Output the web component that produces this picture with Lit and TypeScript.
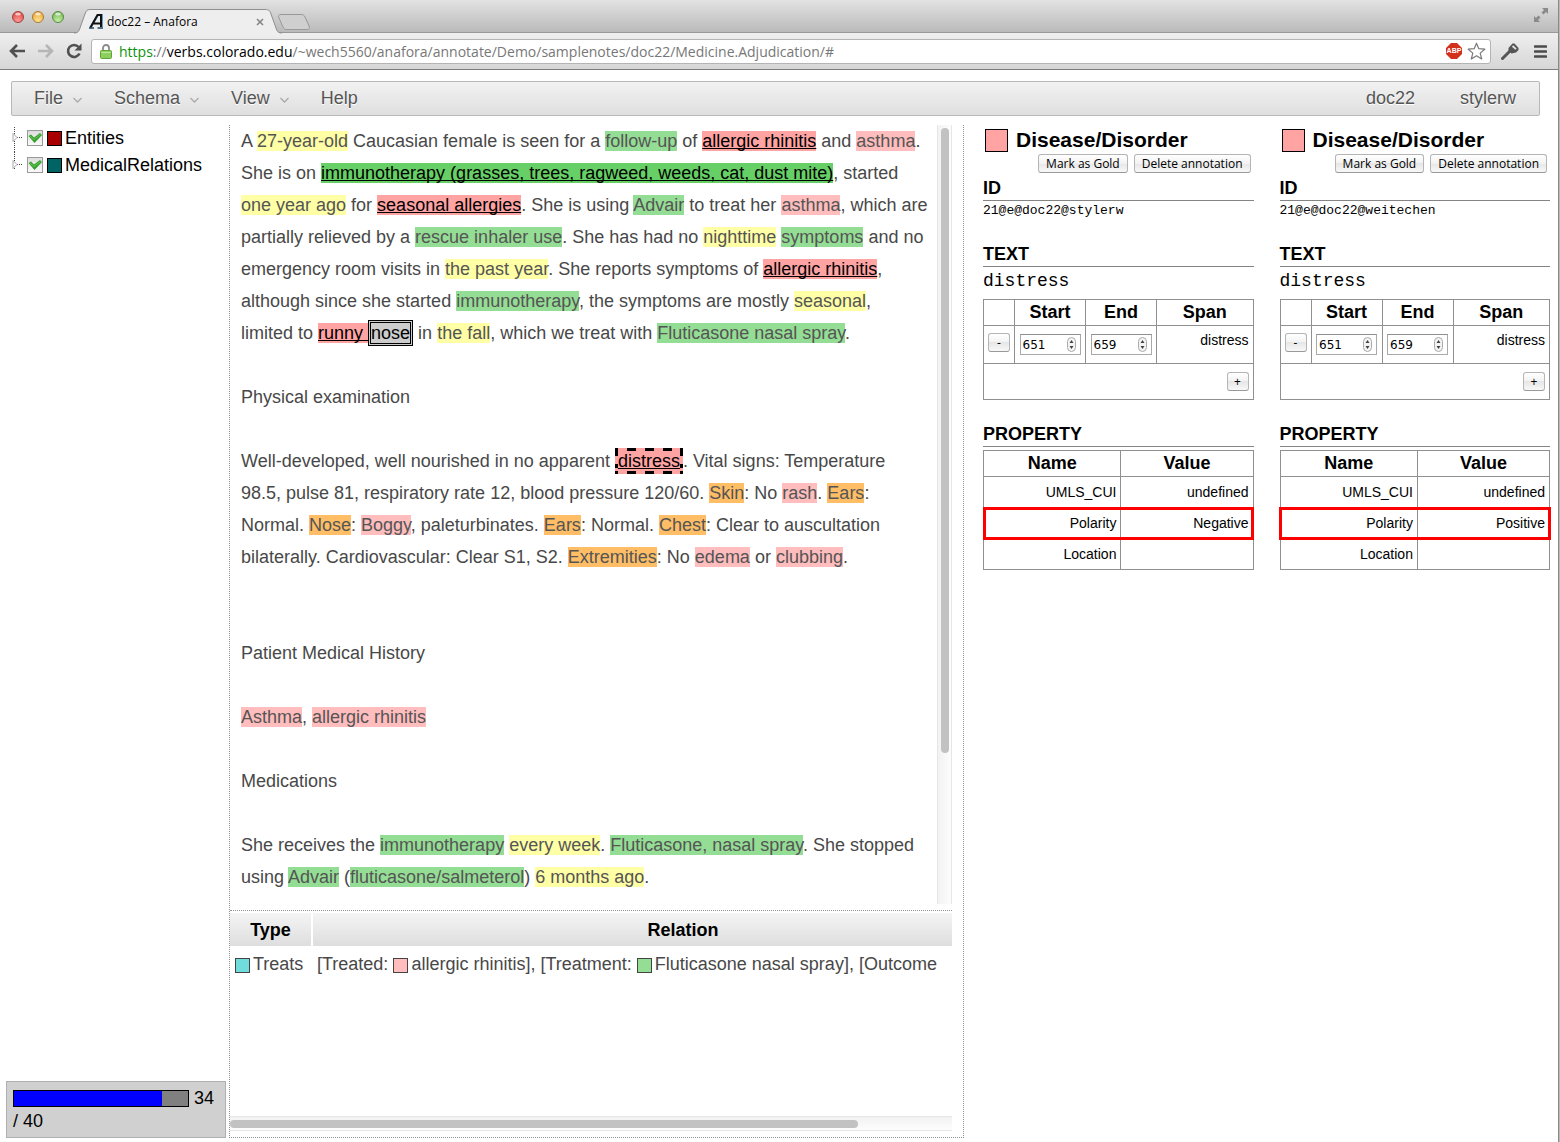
import { LitElement, html, css, svg } from "lit";
import { customElement, property } from "lit/decorators.js";

const mark = (kind: string, text: string) => html`<mark class=${kind}>${text}</mark>`;
const time = (t: string) => mark("time", t);
const med = (t: string) => mark("med", t);
const dis = (t: string) => mark("dis", t);
const body = (t: string) => mark("body", t);
const disLink = (t: string) => mark("dis linked", t);
const medLink = (t: string) => mark("med linked", t);

const NOTE = [
  html`A ${time("27-year-old")} Caucasian female is seen for a ${med("follow-up")} of ${disLink("allergic rhinitis")} and ${dis("asthma")}.`,
  html`She is on ${medLink("immunotherapy (grasses, trees, ragweed, weeds, cat, dust mite)")}, started`,
  html`${time("one year ago")} for ${disLink("seasonal allergies")}. She is using ${med("Advair")} to treat her ${dis("asthma")}, which are`,
  html`partially relieved by a ${med("rescue inhaler use")}. She has had no ${time("nighttime")} ${med("symptoms")} and no`,
  html`emergency room visits in ${time("the past year")}. She reports symptoms of ${disLink("allergic rhinitis")},`,
  html`although since she started ${med("immunotherapy")}, the symptoms are mostly ${time("seasonal")},`,
  html`limited to ${disLink("runny ")}${mark("overlap", "nose")} in ${time("the fall")}, which we treat with ${med("Fluticasone nasal spray")}.`,
  html``,
  html`Physical examination`,
  html``,
  html`Well-developed, well nourished in no apparent ${mark("dis linked current", "distress")}. Vital signs: Temperature`,
  html`98.5, pulse 81, respiratory rate 12, blood pressure 120/60. ${body("Skin")}: No ${dis("rash")}. ${body("Ears")}:`,
  html`Normal. ${body("Nose")}: ${dis("Boggy")}, paleturbinates. ${body("Ears")}: Normal. ${body("Chest")}: Clear to auscultation`,
  html`bilaterally. Cardiovascular: Clear S1, S2. ${body("Extremities")}: No ${dis("edema")} or ${dis("clubbing")}.`,
  html``,
  html``,
  html`Patient Medical History`,
  html``,
  html`${dis("Asthma")}, ${dis("allergic rhinitis")}`,
  html``,
  html`Medications`,
  html``,
  html`She receives the ${med("immunotherapy")} ${time("every week")}. ${med("Fluticasone, nasal spray")}. She stopped`,
  html`using ${med("Advair")} (${med("fluticasone/salmeterol")}) ${time("6 months ago")}.`,
];

@customElement("browser-bar")
export class BrowserBar extends LitElement {
  static styles = css`
    :host { display: block; font-family: "Open Sans", "Noto Sans", sans-serif; color: #000; }
    .strip {
      display: flex; height: 33px; box-sizing: border-box; padding: 0 12px;
      background: linear-gradient(#e2e2e2, #bababa); border-bottom: 1px solid #999;
    }
    .lights { display: flex; gap: 8px; padding-top: 11px; }
    .lights svg { display: block; }
    .tab { position: relative; display: flex; align-items: center; width: 216px; height: 25px; margin: 9px 0 0 10px; }
    .shape { position: absolute; left: 0; top: 0; }
    .favicon { position: relative; margin-left: 15px; }
    .name { position: relative; flex: 1; margin-left: 3px; font-size: 12px; line-height: 24px; }
    .close { position: relative; border: 0; padding: 0; margin-right: 26px; background: none; height: 8px; display: flex; }
    .newtab { margin: 14px auto 0 -13px; border: 0; padding: 0; background: none; height: 17px; display: flex; }
    .full { border: 0; padding: 0; margin-top: 8px; background: none; height: 14px; display: flex; }
    .tools {
      display: flex; align-items: center; height: 37px; box-sizing: border-box; padding: 0 13px 0 9px;
      background: linear-gradient(#efefef, #d6d6d6); border-bottom: 1px solid #7c7c7c;
    }
    .tools button { border: 0; padding: 0; background: none; display: flex; margin-right: 12px; }
    .tools .reload { margin-right: 9px; }
    .address {
      display: flex; align-items: center; flex: 1; min-width: 0; height: 23px; padding: 0 4px 0 8px; margin-right: 10px;
      background: #fff; border: 1px solid #b4b4b4; border-radius: 3px; overflow: hidden;
    }
    .url { flex: 1; margin-left: 7px; font-size: 14px; line-height: 23px; white-space: nowrap; color: #777; outline: none; }
    .scheme { color: #0a930a; }
    .domain { color: #000; }
    .address svg { flex: none; }
    .star { margin-left: 5px; }
    .tools .wrench { margin-right: 15px; }
    .tools .menu { margin-right: 0; }
    .abp { font: bold 7px "Liberation Sans", sans-serif; fill: #fff; }
  `;

  private light(id: string, edge: string, top: string, low: string) {
    return html`<svg width="12" height="12" viewBox="0 0 12 12">
      <defs><radialGradient id=${id} cx=".5" cy=".85" r=".8"><stop offset="0" stop-color=${low}></stop><stop offset="1" stop-color=${top}></stop></radialGradient></defs>
      <circle cx="6" cy="6" r="5.5" fill="url(#${id})" stroke=${edge}></circle>
      <ellipse cx="6" cy="3" rx="2.8" ry="1.6" fill="#fff" opacity=".65"></ellipse></svg>`;
  }

  render() {
    return html`
      <div class="strip">
        <div class="lights">
          ${this.light("r", "#a4403c", "#dd4a46", "#ff9b96")}
          ${this.light("y", "#a87b35", "#eda73c", "#ffe48f")}
          ${this.light("g", "#5a8a45", "#79b95a", "#c6f0a4")}
        </div>
        <div class="tab">
          <svg class="shape" width="216" height="25" viewBox="0 0 216 25">
            <path d="M-3 25V24.5H0C4 24.500 5 22 6 19L11 5C12 2 13 .5 16 .5H191C195 .5 196 2 197 5L202 19C203 22 204 24.500 208 24.500H216V25Z" fill="#eeeeee"></path>
            <path d="M0 24C4 24 5 22 6 19L11 5C12 2 13 .5 16 .5H191C195 .5 196 2 197 5L202 19C203 22 204 24 208 24" fill="none" stroke="#8f8f8f"></path>
          </svg>
          <svg class="favicon" width="15" height="15" viewBox="0 0 15 15">
            <path d="M1 14 9 1h4v12" fill="none" stroke="#5b9fd0" stroke-width="2"></path>
            <path d="M1.500 13.500 8.500 1h3.500V13M4.500 9.500H12" fill="none" stroke="#111" stroke-width="2"></path>
            <path d="M0 14h5M8.500 14H14" stroke="#27455c" stroke-width="1.500"></path>
          </svg>
          <span class="name">doc22 – Anafora</span>
          <button class="close" aria-label="Close tab"><svg width="8" height="8"><path d="M1 1l6 6M7 1l-6 6" stroke="#858585" stroke-width="1.600"></path></svg></button>
        </div>
        <button class="newtab" aria-label="New tab"><svg width="34" height="17"><path d="M4 .5H24C26 .5 27 1 28 3L32 12C33 14 32.500 15.500 30 15.500H10C8 15.500 7 15 6 13L2 4C1 2 1.500 .5 4 .5Z" fill="#cfcfcf" stroke="#999"></path></svg></button>
        <button class="full" aria-label="Full screen"><svg width="14" height="14" viewBox="0 0 14 14"><path d="M14 0V6L12 4 9.500 6.500 7.500 4.500 10 2 8 0ZM0 14V8L2 10 4.500 7.500 6.500 9.500 4 12 6 14Z" fill="#8a8a8a"></path></svg></button>
      </div>
      <div class="tools">
        <button aria-label="Back"><svg width="17" height="14"><path d="M8 1 2 7l6 6M2 7h14" fill="none" stroke="#505050" stroke-width="2.600"></path></svg></button>
        <button aria-label="Forward"><svg width="16" height="14"><path d="M8 1l6 6-6 6M14 7H0" fill="none" stroke="#b5b5b5" stroke-width="2.600"></path></svg></button>
        <button class="reload" aria-label="Reload"><svg width="16" height="16"><path d="M12.600 4A6 6 0 1 0 13.500 10.500" fill="none" stroke="#505050" stroke-width="2.600"></path><path d="M15.500 .5V7.500H8.500Z" fill="#505050"></path></svg></button>
        <div class="address">
          <svg width="12" height="15"><path d="M3 7V4a3 3 0 0 1 6 0v3" fill="none" stroke="#8b8b8b" stroke-width="1.800"></path><rect x=".5" y="6.500" width="11" height="8" rx="1" fill="#8ccf5e" stroke="#5fa435"></rect><path d="M1.500 8.500h9" stroke="#bfe8a0"></path></svg>
          <span class="url" role="textbox" aria-label="Address"><span class="scheme">https</span>://<span class="domain">verbs.colorado.edu</span>/~wech5560/anafora/annotate/Demo/samplenotes/doc22/Medicine.Adjudication/#</span>
          <svg width="16" height="16"><path d="M5 0h6l5 5v6l-5 5H5l-5-5V5Z" fill="#d3301c"></path><text class="abp" x="8" y="10" text-anchor="middle">ABP</text></svg>
          <svg class="star" width="19" height="18" viewBox="0 0 19 18"><path d="M9.500 1.200 11.800 6.700 17.800 7.200 13.200 11.100 14.700 17 9.500 13.800 4.300 17 5.800 11.100 1.200 7.200 7.200 6.700Z" fill="#fff" stroke="#7a7a7a" stroke-width="1.200" stroke-linejoin="round"></path></svg>
        </div>
        <button class="wrench" aria-label="Extension"><svg width="18" height="17" viewBox="0 0 18 17"><path d="M1.500 15.500 9 8" stroke="#555" stroke-width="3" stroke-linecap="round"></path><path d="M7.500 5 11.500 .5 13.500 .5 17.500 5V7L15 9.500 10.500 10.500 7.500 8Z" fill="#555"></path><path d="M11.500 3 15 6.200" stroke="#e2e2e2" stroke-width="1.800"></path></svg></button>
        <button class="menu" aria-label="Menu"><svg width="13" height="13"><path d="M1 1.500h11M1 6.500h11M1 11.500h11" stroke="#4c4c4c" stroke-width="2.600" stroke-linecap="round"></path></svg></button>
      </div>`;
  }
}

@customElement("annotation-panel")
export class AnnotationPanel extends LitElement {
  @property() owner = "";
  @property() polarity = "";

  static styles = css`
    :host { display: block; min-width: 0; padding-top: 3px; color: #000; }
    .title { display: flex; align-items: center; gap: 8px; height: 24px; margin: 0; padding-left: 2px; font-size: 21px; font-weight: bold; }
    .swatch { width: 21px; height: 21px; background: #ffa3a3; border: 1px solid #000; }
    .actions { display: flex; justify-content: flex-end; gap: 6px; padding: 2px 3px 0 0; }
    button {
      font: 12px "Open Sans", "Noto Sans", sans-serif; color: #000; height: 19px; padding: 0 7px; line-height: 17px;
      border: 1px solid #b5b5b5; border-bottom-color: #999; border-radius: 3px; background: linear-gradient(#fff, #f2f2f2 50%, #e6e6e6 50%, #f8f8f8);
    }
    h3 { margin: 0; font-size: 18px; line-height: 23px; border-bottom: 1px solid #848484; }
    .first { margin-top: 4px; }
    .next { margin-top: 22px; }
    .last { margin-top: 23px; }
    .id { font: 13px/20px "Liberation Mono", monospace; }
    .text { font: 18px/28px "Liberation Mono", monospace; }
    table { width: 100%; table-layout: fixed; border-collapse: collapse; margin-top: 4px; }
    th, td { border: 1px solid #909090; box-sizing: border-box; }
    th { font-size: 18px; line-height: 25px; padding: 0; }
    td { font-size: 14px; text-align: right; padding: 0 4px; }
    .c0 { width: 31px; }
    .c1 { width: 71px; }
    .name { width: 51%; }
    .spans td { height: 38px; }
    .spans .top { vertical-align: top; line-height: 28px; }
    .spans .fit { text-align: center; padding: 0; }
    .spans .adder { height: 36px; }
    .small { width: 22px; padding: 0; }
    .fit .small { margin-bottom: 4px; }
    .adder .small { display: block; margin-left: auto; }
    .field { display: flex; align-items: center; box-sizing: border-box; width: 61px; height: 21px; margin: 0 auto; padding-right: 4px; border: 1px solid #a9a9a9; border-top-color: #8f8f8f; }
    input { flex: 1; min-width: 0; border: 0; padding: 0 0 0 2px; font: 12px "DejaVu Sans", sans-serif; color: #000; background: none; appearance: textfield; outline: none; }
    input::-webkit-inner-spin-button { display: none; }
    .props { margin-top: 3px; }
    .props td { height: 31px; }
    .props .conflict { outline: 3px solid #f00; outline-offset: -2px; }
  `;

  private field(label: string, value: number) {
    return html`<span class="field"><input type="number" aria-label=${label} .value=${String(value)} />
      <svg width="9" height="15" viewBox="0 0 9 15"><rect x=".5" y=".5" width="8" height="14" rx="4" fill="#f4f4f4" stroke="#aaa"></rect><path d="M2.500 6h4L4.500 3ZM2.500 9h4L4.500 12Z" fill="#444"></path></svg></span>`;
  }

  render() {
    return html`
      <h2 class="title"><span class="swatch"></span>Disease/Disorder</h2>
      <div class="actions"><button>Mark as Gold</button><button>Delete annotation</button></div>
      <h3 class="first">ID</h3>
      <div class="id">21@e@doc22@${this.owner}</div>
      <h3 class="next">TEXT</h3>
      <div class="text">distress</div>
      <table class="spans">
        <tr><th class="c0"></th><th class="c1">Start</th><th class="c1">End</th><th>Span</th></tr>
        <tr>
          <td class="fit"><button class="small" aria-label="Remove span">-</button></td>
          <td class="fit">${this.field("Start", 651)}</td>
          <td class="fit">${this.field("End", 659)}</td>
          <td class="top">distress</td>
        </tr>
        <tr><td class="adder" colspan="4"><button class="small" aria-label="Add span">+</button></td></tr>
      </table>
      <h3 class="last">PROPERTY</h3>
      <table class="props">
        <tr><th class="name">Name</th><th>Value</th></tr>
        <tr><td>UMLS_CUI</td><td>undefined</td></tr>
        <tr class="conflict"><td>Polarity</td><td>${this.polarity}</td></tr>
        <tr><td>Location</td><td></td></tr>
      </table>`;
  }
}

@customElement("app-root")
export class AppRoot extends LitElement {
  static styles = css`
    :host { display: flex; flex-direction: column; position: relative; min-height: 100vh; background: #fff; font: 18px "Liberation Sans", Arial, sans-serif; color: #484848; }
    .edge { position: absolute; right: 0; top: 0; bottom: 0; width: 2px; box-sizing: border-box; border-left: 1px solid #8a8a8a; background: #b9b9b9; }
    .menubar {
      display: flex; align-items: center; height: 33px; margin: 11px 20px 9px 11px; padding: 0 23px 0 22px;
      border: 1px solid #b8b8b8; border-radius: 2px; background: linear-gradient(#f2f2f2, #dfdfdf);
    }
    .menubar button { display: flex; align-items: center; gap: 10px; border: 0; padding: 0; margin-right: 32px; background: none; font: inherit; color: #555; text-shadow: 0 1px 0 #fff; }
    .menubar svg { margin-top: 3px; }
    .menubar .user { margin: 0 0 0 45px; }
    .menubar .push { margin-left: auto; }
    .columns { flex: 1; display: grid; grid-template-columns: 229px minmax(0, 1fr) 596px; }
    .side { display: flex; flex-direction: column; justify-content: space-between; padding: 0 3px 4px 6px; color: #000; }
    .tree { list-style: none; margin: 0; padding: 0 0 0 6px; }
    .tree li { display: flex; align-items: center; height: 27px; }
    .tree label { display: flex; align-items: center; line-height: 20px; padding-bottom: 2px; }
    .twig { flex: none; }
    .check { display: grid; margin: 0 4px; }
    .check input, .check svg { grid-area: 1 / 1; margin: 0; }
    .check input { appearance: none; width: 16px; height: 16px; border: 1px solid #9a9a9a; background: linear-gradient(#ddd, #fafafa); }
    .check svg { pointer-events: none; }
    .box { display: inline-block; box-sizing: border-box; width: 15px; height: 15px; border: 1px solid #000; }
    .tree .box { margin: 2px 3px 0 0; }
    .entities { background: #a80000; }
    .relations { background: #006464; }
    .progress { border: 1px solid #b0b0b0; background: #d0d0d0; padding: 5px 5px 4px 6px; line-height: 23px; }
    progress { appearance: none; box-sizing: border-box; width: 176px; height: 17px; border: 1px solid #000; vertical-align: -3px; }
    progress::-webkit-progress-bar { background: #808080; }
    progress::-webkit-progress-value { background: #00f; }
    .center { display: flex; flex-direction: column; border: 1px dotted #909090; border-top: 0; margin-bottom: 4px; padding-right: 11px; }
    .note { display: flex; }
    .lines { flex: 1; min-width: 0; overflow: hidden; padding: 0 0 11px 11px; }
    .line { height: 32px; line-height: 32px; white-space: pre; }
    mark { color: #555; }
    .time { background: #ffffa6; }
    .med { background: #94dd94; }
    .dis { background: #ffbdbd; }
    .body { background: #ffbe66; }
    .linked { color: #000; text-decoration: underline 1px; text-decoration-skip-ink: none; }
    .linked.med { background: #66d066; }
    .linked.dis { background: #ffa3a3; }
    .overlap { color: #000; background: #ccc; border: 3px double #000; }
    .linked.current {
      padding: 3px;
      background:
        repeating-linear-gradient(90deg, #000 0 3px, transparent 3px 12px, #000 12px 18px) 0 0 / 100% 3px no-repeat,
        repeating-linear-gradient(90deg, #000 0 3px, transparent 3px 12px, #000 12px 18px) 0 100% / 100% 3px no-repeat,
        linear-gradient(#000 0 8px, transparent 8px 16px, #000 16px 20px, transparent 20px 23px, #000 23px) 0 0 / 3px 100% no-repeat,
        linear-gradient(#000 0 8px, transparent 8px 16px, #000 16px 20px, transparent 20px 23px, #000 23px) 100% 0 / 3px 100% no-repeat,
        #ffa3a3;
    }
    .vbar { width: 13px; border: 1px solid #e6e6e6; border-width: 0 1px; background: linear-gradient(90deg, #f2f2f2, #fdfdfd); padding-top: 3px; }
    .vthumb { width: 8px; height: 625px; margin-left: 3px; border-radius: 4px; background: #c2c2c2; }
    .links { flex: 1; display: flex; flex-direction: column; margin-top: 6px; border-top: 1px dotted #909090; padding-top: 2px; }
    .clip { flex: 1; overflow: hidden; }
    table { width: 114%; table-layout: fixed; border-collapse: collapse; white-space: nowrap; }
    th { height: 33px; padding: 1px 0 0; box-sizing: border-box; color: #000; background: linear-gradient(#f4f4f4, #dedede); }
    .type { width: 82px; border-right: 2px solid #fff; }
    td { padding: 7px 5px; line-height: 22px; }
    td .box { border-color: #444; margin-right: 3px; vertical-align: -3px; }
    .treats { background: #70dcdc; }
    .hbar { height: 13px; border: 1px solid #e6e6e6; border-width: 1px 0; background: linear-gradient(#f2f2f2, #fdfdfd); margin-bottom: 6px; }
    .hthumb { width: 87%; height: 8px; margin-top: 3px; border-radius: 4px; background: #c2c2c2; }
    .panels { display: grid; grid-template-columns: repeat(2, minmax(0, 1fr)); gap: 26px; align-items: start; padding: 0 10px 0 19px; }
  `;

  private menu(name: string) {
    return html`<button>${name}<svg width="9" height="6"><path d="M.5 1 4.500 5 8.500 1" fill="none" stroke="#aaa" stroke-width="1.300"></path></svg></button>`;
  }

  private node(name: string, kind: string, more: boolean) {
    return html`<li>
      <svg class="twig" width="11" height="27">${more
        ? svg`<path d="M2.500 2V27" stroke="#444" stroke-dasharray="1 1"></path>`
        : svg`<path d="M2.500 0V17" stroke="#444" stroke-dasharray="1 1"></path>`}
        <path d="M5 12.500H11" stroke="#444" stroke-dasharray="1 1"></path>
        <path d="M1 8.500 5 12.500 1 16.500Z" fill="#fff" stroke="#aaa"></path></svg>
      <label><span class="check"><input type="checkbox" checked />
        <svg width="16" height="16"><path d="M1.500 6 4 4.500 7 7.500 13 3 15 5 7.500 13Z" fill="#35a02c"></path><path d="M3 6 7 9.500 13.500 4.500" fill="none" stroke="#6cc95a"></path></svg></span>
        <span class="box ${kind}"></span>${name}</label></li>`;
  }

  render() {
    return html`
      <browser-bar></browser-bar>
      <nav class="menubar">
        ${this.menu("File")}${this.menu("Schema")}${this.menu("View")}<button>Help</button>
        <button class="user push">doc22</button><button class="user">stylerw</button>
      </nav>
      <main class="columns">
        <aside class="side">
          <ul class="tree">${this.node("Entities", "entities", true)}${this.node("MedicalRelations", "relations", false)}</ul>
          <div class="progress"><progress value="34" max="40" aria-label="Adjudicated"></progress> 34 / 40</div>
        </aside>
        <section class="center">
          <div class="note">
            <div class="lines">${NOTE.map((l) => html`<div class="line">${l}</div>`)}</div>
            <div class="vbar"><div class="vthumb"></div></div>
          </div>
          <div class="links">
            <div class="clip">
              <table>
                <tr><th class="type">Type</th><th>Relation</th></tr>
                <tr>
                  <td><span class="box treats"></span>Treats</td>
                  <td>[Treated: <span class="box dis"></span>allergic rhinitis], [Treatment: <span class="box med"></span>Fluticasone nasal spray], [Outcome</td>
                </tr>
              </table>
            </div>
            <div class="hbar"><div class="hthumb"></div></div>
          </div>
        </section>
        <section class="panels">
          <annotation-panel owner="stylerw" polarity="Negative"></annotation-panel>
          <annotation-panel owner="weitechen" polarity="Positive"></annotation-panel>
        </section>
      </main>
      <div class="edge"></div>`;
  }
}
